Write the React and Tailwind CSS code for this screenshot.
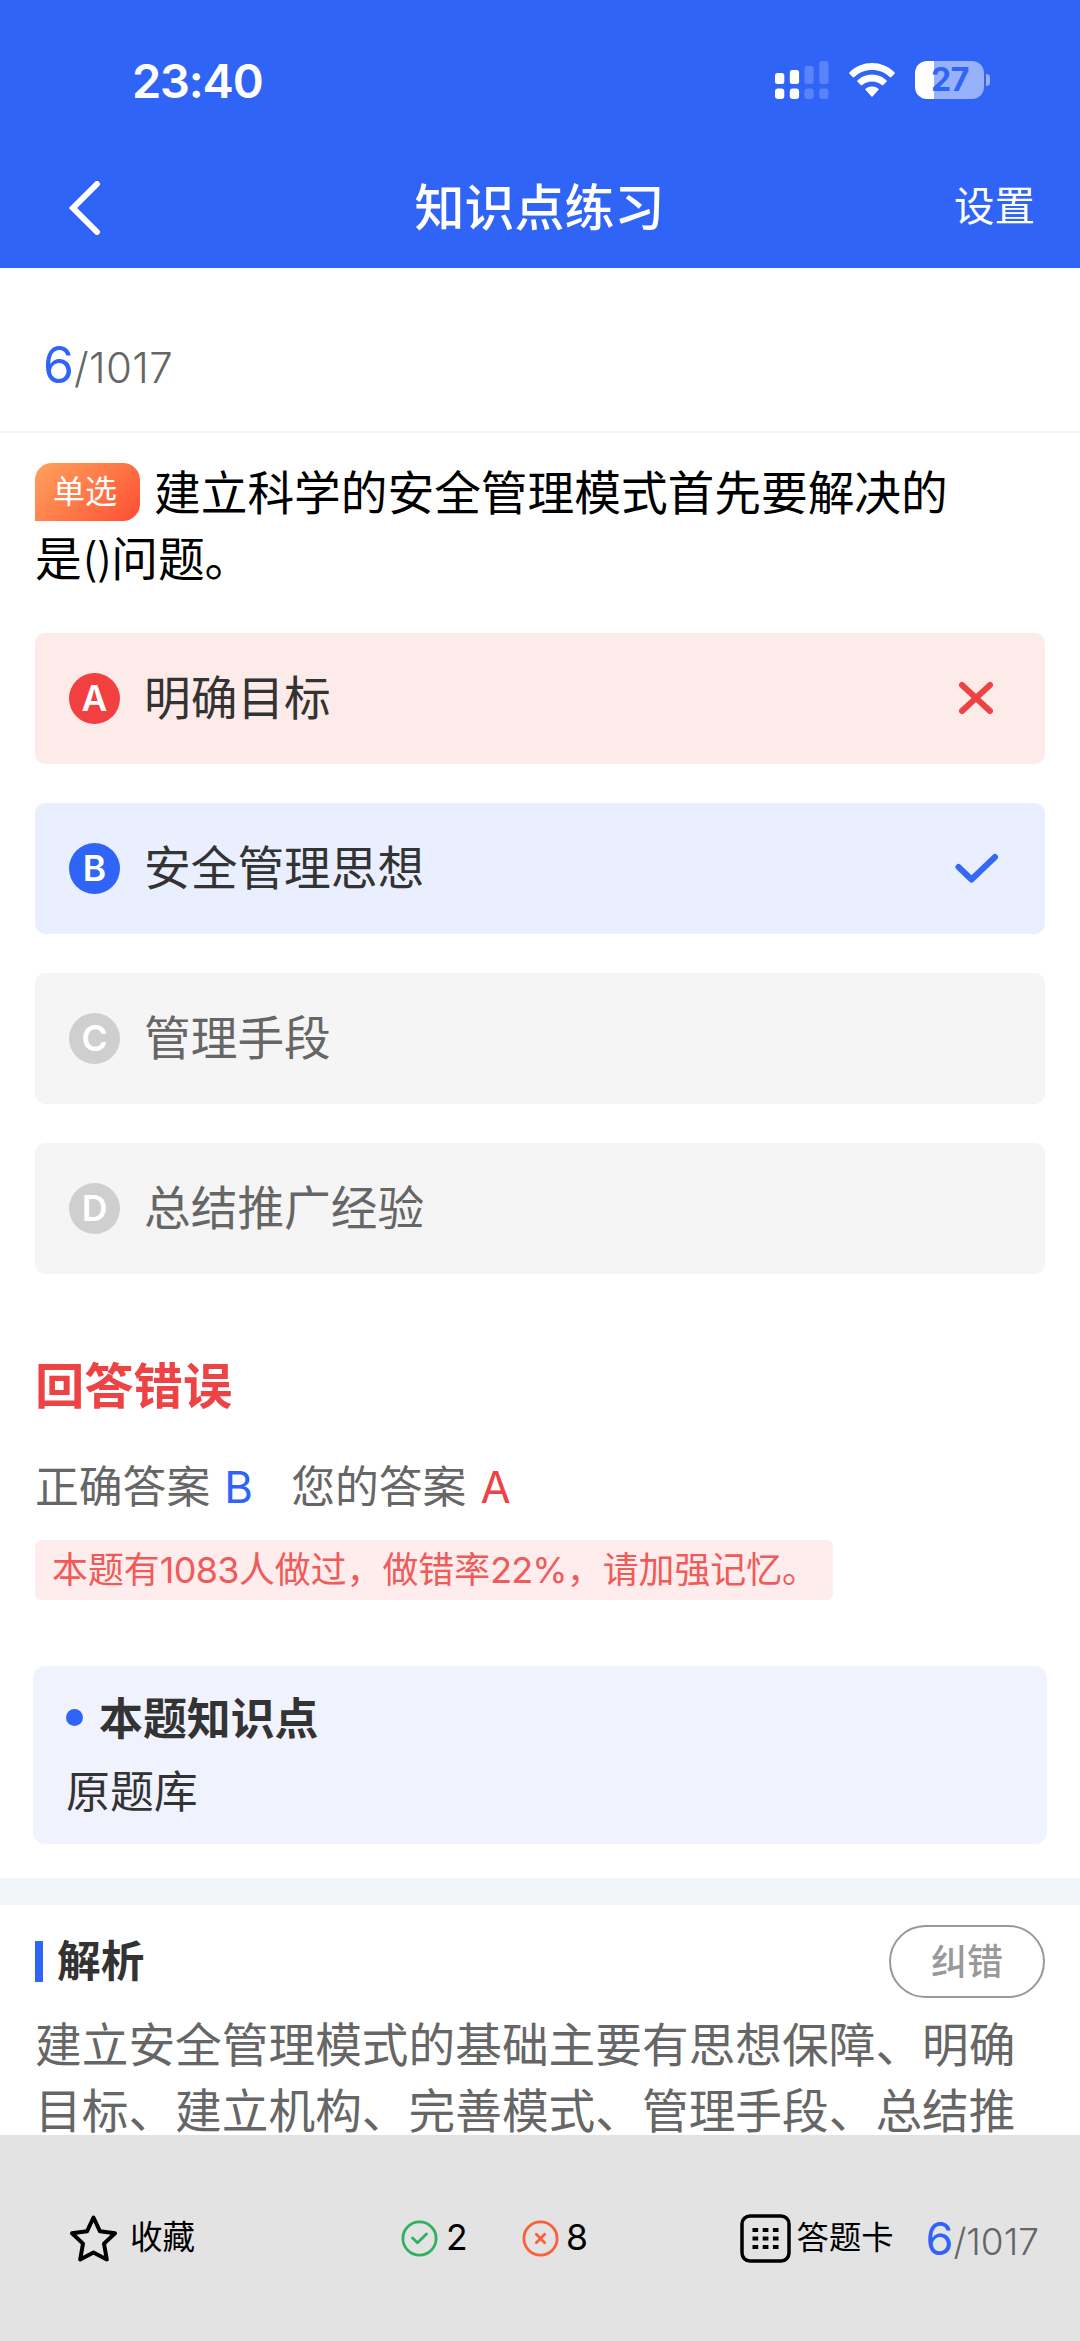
import React, { useState } from 'react';

const TOTAL = 1017;

const options = [
  { key: 'A', text: '明确目标' },
  { key: 'B', text: '安全管理思想' },
  { key: 'C', text: '管理手段' },
  { key: 'D', text: '总结推广经验' },
];

const question = {
  index: 6,
  type: '单选',
  correct: 'B',
  people: 1083,
  wrongRate: 22,
};

const StatusBar = () => (
  <div className="flex items-center h-[160px] pl-[132px] pr-[90px]">
    <span className="text-[47px] leading-none font-semibold tracking-[-1.2px]">23:40</span>
    <div className="flex items-center ml-auto">
      <svg className="w-[54px] h-[38px]" viewBox="0 0 54 38" fill="#fff">
        <rect x="0" y="12" width="9.3" height="11" rx="2.5" />
        <rect x="14.8" y="9" width="9.3" height="14" rx="2.5" />
        <rect x="29.4" y="5" width="9.3" height="18" rx="2.5" opacity="0.2" />
        <rect x="44.2" y="0" width="9.3" height="23" rx="2.5" opacity="0.2" />
        <rect x="0" y="27.5" width="9.3" height="10.5" rx="3" />
        <rect x="14.8" y="27.5" width="9.3" height="10.5" rx="3" />
        <rect x="29.4" y="27.5" width="9.3" height="10.5" rx="3" opacity="0.2" />
        <rect x="44.2" y="27.5" width="9.3" height="10.5" rx="3" opacity="0.2" />
      </svg>
      <svg className="w-[46px] h-[34px] ml-[20px]" viewBox="0 0 46 34" fill="#fff">
        <path d="M23 0C14.3 0 6.5 3.4 .5 9.2C0 9.7 0 10.3 .5 10.8L3.6 14C4.1 14.5 4.7 14.5 5.2 14C10 9.6 16.2 7 23 7C29.8 7 36 9.6 40.8 14C41.3 14.5 41.9 14.5 42.4 14L45.5 10.8C46 10.3 46 9.7 45.5 9.2C39.5 3.4 31.7 0 23 0Z" />
        <path d="M23 11.6C17.5 11.6 12.5 13.7 8.6 17.2C8.1 17.7 8.1 18.3 8.6 18.8L11.7 22C12.2 22.5 12.7 22.5 13.3 22C15.9 19.8 19.3 18.5 23 18.5C26.7 18.5 30.1 19.8 32.7 22C33.3 22.5 33.8 22.5 34.3 22L37.4 18.8C37.9 18.3 37.9 17.7 37.4 17.2C33.5 13.7 28.5 11.6 23 11.6Z" />
        <path d="M23 23.5C20.6 23.5 18.5 24.3 16.8 25.5C16.2 26 16.2 26.6 16.7 27.1L22.2 33.2C22.7 33.8 23.3 33.8 23.8 33.2L29.3 27.1C29.8 26.6 29.8 26 29.2 25.5C27.5 24.3 25.4 23.5 23 23.5Z" />
      </svg>
      <div className="flex items-center gap-[2px] ml-[20px]">
        <div className="flex items-center justify-center w-[69px] h-[38px] pl-px rounded-[12px] bg-[linear-gradient(90deg,#fff_27%,#98b1fb_27%)] text-[#3064f7]">
          <span className="text-[32px] leading-none font-bold tracking-[-0.5px]">27</span>
        </div>
        <div className="w-[4px] h-[12px] rounded-r-full bg-[#98b1fb]" />
      </div>
    </div>
  </div>
);

const NavBar = () => (
  <div className="grid grid-cols-3 items-center h-[95px] pl-[69px] pr-[45px]">
    <svg className="w-[32px] h-[54px]" viewBox="0 0 32 54" fill="none" stroke="#fff" strokeWidth="6" strokeLinecap="round">
      <path d="M28 3L4 27L28 51" />
    </svg>
    <h1 className="text-[50px] leading-none font-medium text-center whitespace-nowrap -ml-[25px]">知识点练习</h1>
    <span className="text-[40.5px] leading-none text-right">设置</span>
  </div>
);

const Option = ({ item, selected, correct }) => {
  const isRight = item.key === correct;
  const isWrong = item.key === selected && !isRight;

  let box = 'bg-[#f5f5f5] text-[#666]';
  let dot = 'bg-[#cfcfcf]';
  if (isRight) {
    box = 'bg-[#e9effe] text-[#333]';
    dot = 'bg-[#3064f7]';
  } else if (isWrong) {
    box = 'bg-[#fdebea] text-[#333]';
    dot = 'bg-[#f23f40]';
  }

  return (
    <li className={`flex items-center h-[131px] pl-[34px] pr-[46px] rounded-[10px] ${box}`}>
      <span className={`flex items-center justify-center w-[51px] h-[51px] rounded-full text-[35.5px] leading-none font-semibold text-white ${dot}`}>
        {item.key}
      </span>
      <span className="ml-[24px] text-[46.7px] leading-none">{item.text}</span>
      {isWrong && (
        <svg className="w-[44px] h-[44px] ml-auto mr-px mb-0.5" viewBox="0 0 44 44" fill="none" stroke="#ee4344" strokeWidth="6" strokeLinecap="round">
          <path d="M8 9L36 35M36 9L8 35" />
        </svg>
      )}
      {isRight && (
        <svg className="w-[44px] h-[44px] ml-auto" viewBox="0 0 44 44" fill="none" stroke="#3668f4" strokeWidth="6" strokeLinecap="round" strokeLinejoin="round">
          <path d="M3.5 20L16.5 32.5L40 10" />
        </svg>
      )}
    </li>
  );
};

const Footer = ({ right, wrong, favorite, onFavorite }) => (
  <footer className="flex items-center shrink-0 h-[206px] pl-[69px] pr-[41px] bg-[#e3e3e3] text-black">
    <button onClick={onFavorite} className="flex items-center">
      <svg className="w-[49px] h-[49px]" viewBox="0 0 49 49" fill={favorite ? '#000' : 'none'} stroke="#000" strokeWidth="4" strokeLinejoin="round">
        <path d="M24.5 3.5L31 17.3L46 19.3L35 29.6L37.8 45.5L24.5 38.5L11.2 45.5L14 29.6L3 19.3L18 17.3Z" />
      </svg>
      <span className="ml-[12px] mt-px text-[32.5px] leading-none">收藏</span>
    </button>

    <div className="flex items-center ml-[206px] text-[35.5px] leading-none">
      <svg className="w-[37px] h-[37px]" viewBox="0 0 37 37" fill="none" stroke="#2fb160" strokeWidth="2.8" strokeLinecap="round" strokeLinejoin="round">
        <circle cx="18.5" cy="18.5" r="16.6" />
        <path d="M11.5 18L16.5 22.8L25.5 14" />
      </svg>
      <span className="w-[22px] ml-[8px]">{right}</span>
      <svg className="w-[37px] h-[37px] ml-[54px]" viewBox="0 0 37 37" fill="none" stroke="#fb5f3c" strokeWidth="2.8" strokeLinecap="round">
        <circle cx="18.5" cy="18.5" r="16.6" />
        <path d="M14.3 14.3L22.7 22.7M22.7 14.3L14.3 22.7" />
      </svg>
      <span className="w-[22px] ml-[7px]">{wrong}</span>
    </div>

    <div className="flex items-center ml-auto">
      <svg className="w-[51px] h-[49px]" viewBox="0 0 51 49" fill="none">
        <rect x="2" y="2" width="47" height="45" rx="8" stroke="#000" strokeWidth="3.5" />
        <path d="M12.5 16H38.5M12.5 24.5H38.5M12.5 33H38.5" stroke="#000" strokeWidth="4" strokeDasharray="5.7 4.5" />
      </svg>
      <span className="ml-[6px] mt-px text-[32.3px] leading-none">答题卡</span>
      <p className="ml-[32px] leading-none font-light text-[#666]">
        <span className="text-[45px] font-normal text-[#3064f7]">{question.index}</span>
        <span className="text-[37px]">/{TOTAL}</span>
      </p>
    </div>
  </footer>
);

const App = () => {
  const [selected] = useState('A');
  const [favorite, setFavorite] = useState(false);

  return (
    <div className="flex flex-col w-[1080px] h-[2341px] overflow-hidden bg-white font-[Inter,'Noto_Sans_CJK_SC',sans-serif]">
      <header className="shrink-0 h-[268px] bg-[#3064f7] text-white">
        <StatusBar />
        <NavBar />
      </header>

      <main className="flex-1 min-h-0">
        {/* progress */}
        <div className="flex items-center h-[165px] pl-[43px] pt-[30px] border-b-2 border-[#f4f4f4]">
          <p className="leading-none font-light text-[#666]">
            <span className="text-[50px] font-normal text-[#3064f7]">{question.index}</span>
            <span className="text-[42px] tracking-[0.4px]">/{TOTAL}</span>
          </p>
        </div>

        {/* question */}
        <section className="px-[35px] pt-[28px]">
          <h2 className="text-[46.7px] leading-[65.5px] text-black whitespace-nowrap">
            <span className="inline-flex items-center justify-center w-[105px] h-[58px] mr-[14px] -mt-[5px] mb-[5px] pr-[5px] align-middle rounded-[17px] rounded-bl-none bg-linear-135 from-[#ffa05c] to-[#ff4a34] text-[32px] leading-none text-white">
              {question.type}
            </span>
            建立科学的安全管理模式首先要解决的
            <br />
            是<span className="font-light tracking-[-1.5px]">()</span>问题。
          </h2>

          <ul className="flex flex-col gap-[39px] mt-[41px]">
            {options.map((item) => (
              <Option key={item.key} item={item} selected={selected} correct={question.correct} />
            ))}
          </ul>
        </section>

        {/* result */}
        <section className="px-[35px] pt-[87px]">
          <h3 className="text-[49.3px] leading-[50px] font-bold text-[#ee4344]">回答错误</h3>
          <div className="flex items-center mt-[47px] text-[43.8px] leading-[60px] text-[#666]">
            <span>正确答案</span>
            <span className="w-[31px] ml-[14px] text-[#3064f7]">B</span>
            <span className="ml-[36px]">您的答案</span>
            <span className="ml-[14px] text-[#ee4344]">{selected}</span>
          </div>
          <p className="w-[798px] h-[60px] mt-[22px] pl-[17px] rounded-[6px] bg-[#ffecec] text-[35.9px] leading-[60px] text-[#f05a58] whitespace-nowrap">
            本题有<span className="tracking-[-0.6px]">{question.people}</span>人做过，做错率
            <span className="tracking-[-0.8px]">{question.wrongRate}%</span>，请加强记忆。
          </p>
        </section>

        {/* knowledge point */}
        <section className="h-[178px] mx-[33px] mt-[66px] px-[33px] pt-[23px] rounded-[12px] bg-[#f0f2fe] text-[#333]">
          <h3 className="flex items-center text-[43.9px] leading-[60px] font-bold">
            <i className="w-[17px] h-[17px] mr-[16px] mb-[3px] rounded-full bg-[#3064f7]" />
            本题知识点
          </h3>
          <p className="mt-[13px] text-[43.9px] leading-[60px]">原题库</p>
        </section>

        <div className="h-[27px] mt-[34px] bg-[#f3f6f8]" />

        {/* analysis */}
        <section className="px-[35px] pt-[20px]">
          <div className="flex items-center justify-between h-[73px]">
            <h3 className="flex items-center text-[43.7px] leading-none font-bold text-[#333]">
              <i className="w-[8px] h-[41px] mr-[14px] bg-[#3064f7]" />
              解析
            </h3>
            <button className="w-[156px] h-[73px] border-[2.5px] border-[#999] rounded-full text-[36px] leading-none font-medium text-[#999]">
              纠错
            </button>
          </div>
          <p className="mt-[14px] text-[46.7px] leading-[66px] text-[#666] whitespace-nowrap">
            建立安全管理模式的基础主要有思想保障、明确
            <br />
            目标、建立机构、完善模式、管理手段、总结推
          </p>
        </section>
      </main>

      <Footer right={2} wrong={8} favorite={favorite} onFavorite={() => setFavorite(!favorite)} />
    </div>
  );
};

export default App;
